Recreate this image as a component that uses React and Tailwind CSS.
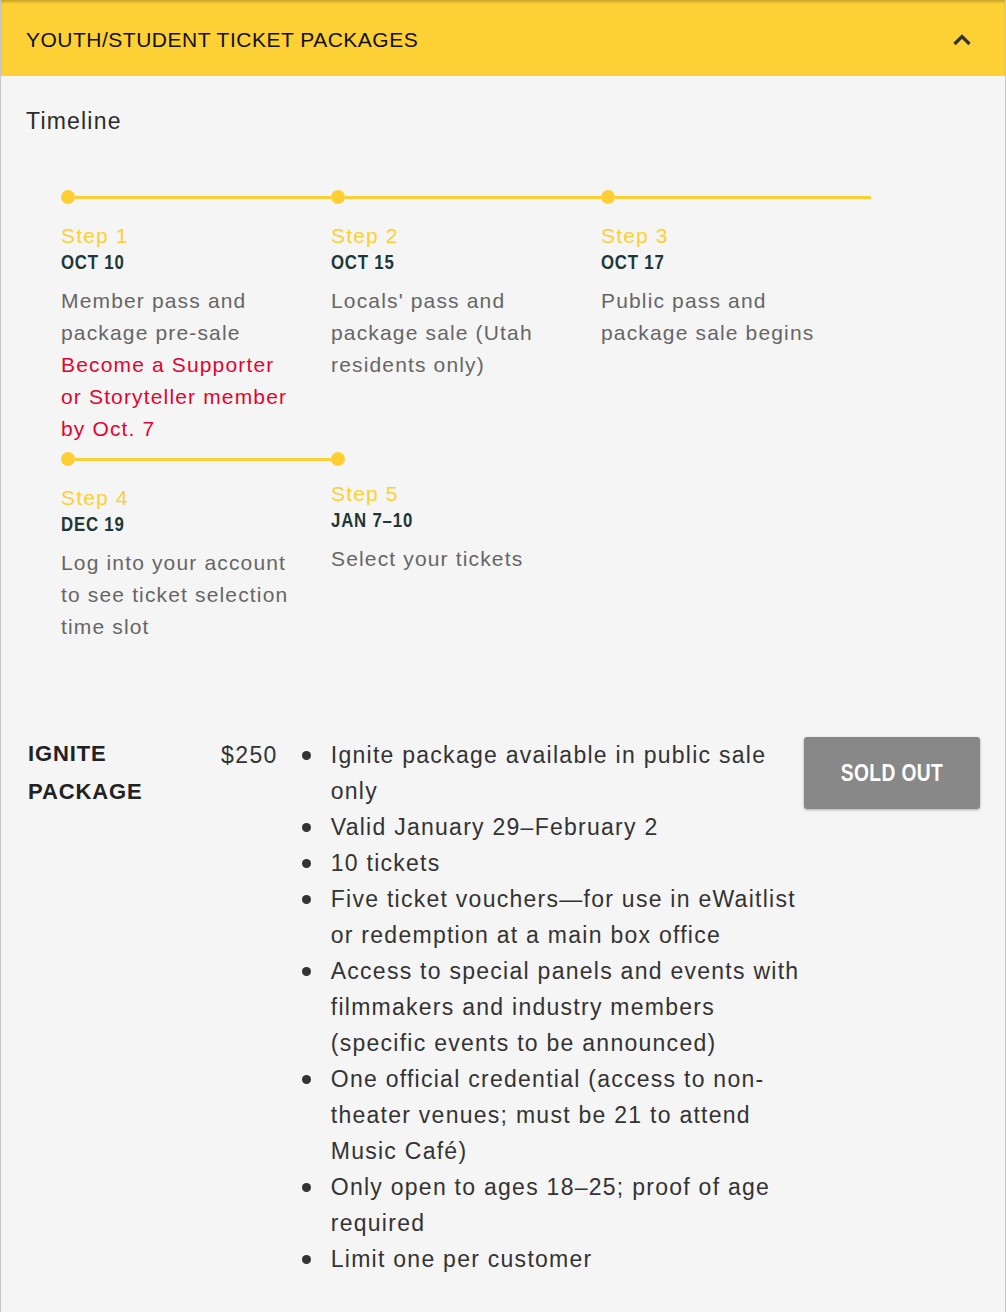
import React from "react";

const steps = [
    { label: "Step 1", date: "OCT 10", text: "Member pass and package pre-sale", link: "Become a Supporter or Storyteller member by Oct. 7" },
    { label: "Step 2", date: "OCT 15", text: "Locals' pass and package sale (Utah residents only)" },
    { label: "Step 3", date: "OCT 17", text: "Public pass and package sale begins" },
    { label: "Step 4", date: "DEC 19", text: "Log into your account to see ticket selection time slot" },
    { label: "Step 5", date: "JAN 7–10", text: "Select your tickets", last: true },
];

const perks = [
    "Ignite package available in public sale only",
    "Valid January 29–February 2",
    "10 tickets",
    "Five ticket vouchers—for use in eWaitlist or redemption at a main box office",
    "Access to special panels and events with filmmakers and industry members (specific events to be announced)",
    "One official credential (access to non-theater venues; must be 21 to attend Music Café)",
    "Only open to ages 18–25; proof of age required",
    "Limit one per customer",
];

const Step = ({ step }) => (
    <div className="w-[270px]">
        {/* dot + connector */}
        <div className="flex items-center h-[14px]">
            <div className="w-[14px] h-[14px] rounded-full bg-[#fdcf34] shrink-0"></div>
            {!step.last && <div className="flex-1 h-[3px] bg-[#fdcf34]"></div>}
        </div>
        <div className={step.last ? "pt-[15px]" : "pt-[19px]"}>
            <div className="text-[21px] leading-[26px] tracking-[0.055em] text-[#fdcf34]">{step.label}</div>
            <div className="h-[26px] leading-[26px]">
                <span className="inline-block origin-left scale-x-[0.8] font-bold text-[21px] tracking-[1px] text-[#1d3838] whitespace-nowrap">
                    {step.date}
                </span>
            </div>
            <p className="mt-[10px] w-[235px] text-[21px] leading-[32px] tracking-[0.055em] text-[#666]">
                {step.text}
                {step.link && (
                    <>
                        <br />
                        <span className="text-[#e4032e]">{step.link}</span>
                    </>
                )}
            </p>
        </div>
    </div>
);

const App = () => {
    return (
        <div className="min-h-[1312px] bg-[#f5f5f5] border-x border-[#c6c6c6] font-['Liberation_Sans',Arial,sans-serif]">
            {/* Accordion header */}
            <div className="h-[76px] bg-[#fdd035] flex items-center justify-between pt-[3px] pl-[25px] pr-[34px] shadow-[inset_0_3px_3px_-1px_rgba(0,0,0,0.22)]">
                <h1 className="text-[21px] tracking-[0.5px] text-[#111]">YOUTH/STUDENT TICKET PACKAGES</h1>
                <svg width="18" height="13" viewBox="0 0 18 13" fill="none" stroke="#333" strokeWidth="3.2">
                    <polyline points="1.5,11 9,3.5 16.5,11" />
                </svg>
            </div>

            <div className="px-[25px]">
                <h2 className="pt-[29px] text-[23px] leading-[32px] tracking-[1.2px] text-[#2b2b2b]">Timeline</h2>

                {/* Timeline */}
                <div className="ml-[35px] mt-[53px] grid grid-cols-[270px_270px_270px] gap-y-[7px]">
                    {steps.map((s) => (
                        <Step key={s.label} step={s} />
                    ))}
                </div>

                {/* Package */}
                <div className="mt-[94px] flex items-start pb-[36px]">
                    <div className="w-[172px] pl-[2px] -mt-[2px] font-bold text-[22px] leading-[38px] tracking-[0.04em] text-[#222]">
                        IGNITE
                        <br />
                        PACKAGE
                    </div>
                    <div className="w-[80px] text-right text-[23px] leading-[36px] tracking-[0.06em] text-[#333]">$250</div>
                    <ul className="ml-[20px] w-[505px] text-[23px] leading-[36px] tracking-[0.055em] text-[#333]">
                        {perks.map((p) => (
                            <li key={p} className="flex">
                                <span className="w-[33px] shrink-0 pt-[14px] pl-[4px]">
                                    <span className="block w-[9px] h-[9px] rounded-full bg-[#333]"></span>
                                </span>
                                <span>{p}</span>
                            </li>
                        ))}
                    </ul>
                    <button className="w-[176px] h-[72px] ml-[2px] rounded-[3px] bg-[#888] text-white shadow-[0_1px_3px_rgba(0,0,0,0.3)]">
                        <span className="inline-block scale-x-[0.8] font-bold text-[24px] tracking-[0.5px] whitespace-nowrap">SOLD OUT</span>
                    </button>
                </div>
            </div>
        </div>
    );
};

export default App;
